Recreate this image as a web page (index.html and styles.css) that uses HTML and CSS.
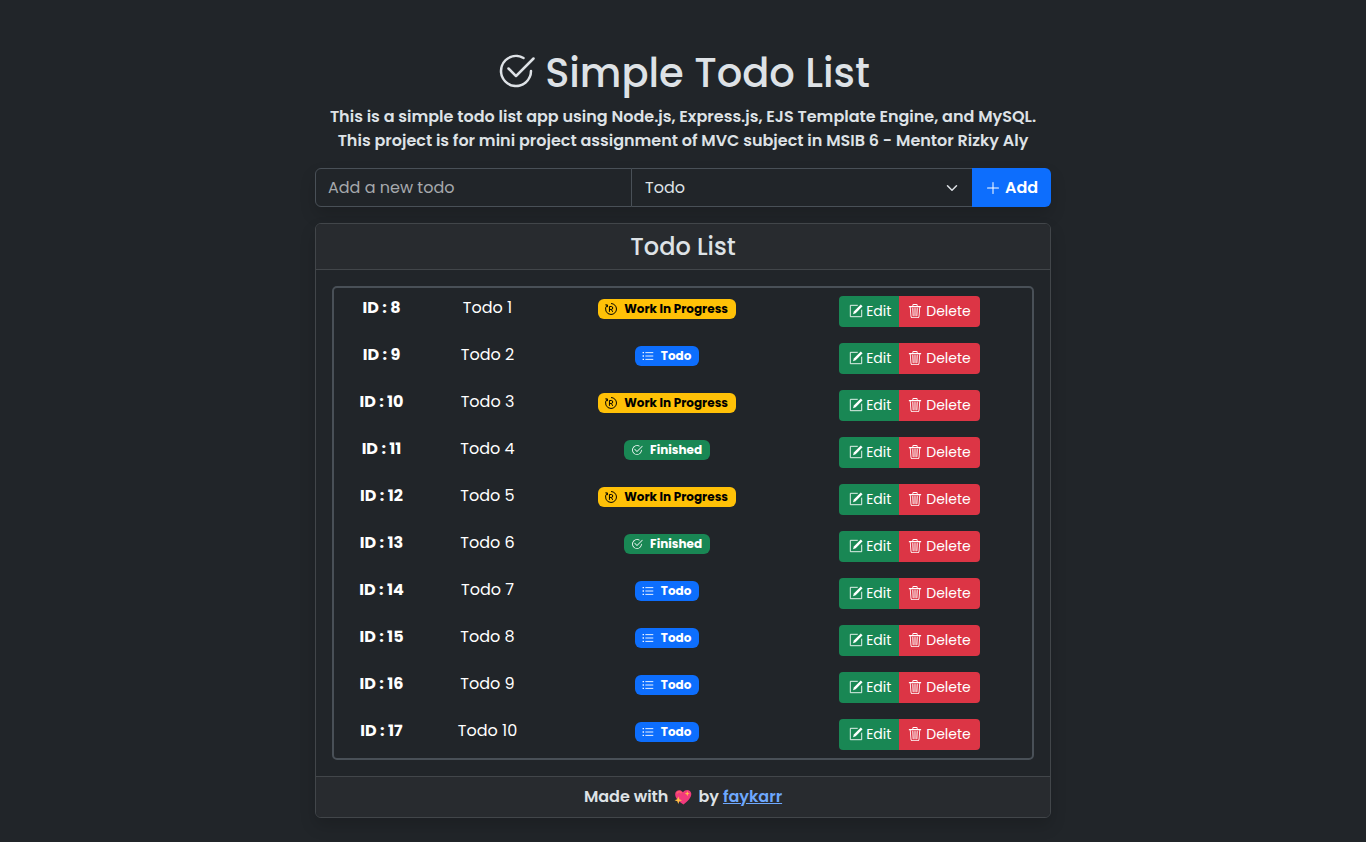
FILE: index.html
```html
<!DOCTYPE html>
<html lang="en"><head><meta charset="utf-8"><title>Simple Todo List</title><link rel="stylesheet" href="styles.css"></head>
<body>
<svg class="defs" aria-hidden="true">
<symbol id="check" viewBox="0 0 16 16"><path d="M2.5 8a5.5 5.5 0 0 1 8.25-4.764.5.5 0 0 0 .5-.866A6.5 6.5 0 1 0 14.5 8a.5.5 0 0 0-1 0 5.5 5.5 0 1 1-11 0z"/><path d="M15.354 3.354a.5.5 0 0 0-.708-.708L8 9.293 5.354 6.646a.5.5 0 1 0-.708.708l3 3a.5.5 0 0 0 .708 0l7-7z"/></symbol>
<symbol id="plus" viewBox="0 0 16 16"><path d="M8 2a.5.5 0 0 1 .5.5v5h5a.5.5 0 0 1 0 1h-5v5a.5.5 0 0 1-1 0v-5h-5a.5.5 0 0 1 0-1h5v-5A.5.5 0 0 1 8 2z"/></symbol>
<symbol id="list" viewBox="0 0 16 16"><path d="M5 3.500h9.500M5 8h9.500M5 12.500h9.500" fill="none" stroke="currentColor" stroke-width="1.200" stroke-linecap="round"/><path d="M.8 2.600h1.800v1.800H.8zM.8 7.100h1.800v1.800H.8zM.8 11.600h1.800v1.800H.8z"/></symbol>
<symbol id="wip" viewBox="0 0 16 16"><g fill="none" stroke="currentColor" stroke-width="1.300"><path d="M8 .7a7.300 7.300 0 0 1 0 14.600A7.300 7.300 0 0 1 2.800 2.900M.4 2.500h2.800v3M5.900 11.800V4.700h2.500a1.950 1.950 0 0 1 0 3.900H5.900M8.400 8.600l1.900 3.200"/></g></symbol>
<symbol id="edit" viewBox="0 0 16 16"><path d="M10 1.500H1.500v13h13V6.500" fill="none" stroke="currentColor"/><path d="M13.500.5 15.500 2.500 7.600 10.600 4.600 11.600 5.500 8.500z"/></symbol>
<symbol id="trash" viewBox="0 0 16 16"><path d="M6.500 1h3a.5.5 0 0 1 .5.5v1H6v-1a.5.5 0 0 1 .5-.5M11 2.500v-1A1.500 1.500 0 0 0 9.500 0h-3A1.500 1.500 0 0 0 5 1.500v1H1.500a.5.5 0 0 0 0 1h.538l.853 10.660A2 2 0 0 0 4.885 16h6.230a2 2 0 0 0 1.994-1.840l.853-10.660h.538a.5.5 0 0 0 0-1zm1.958 1-.846 10.580a1 1 0 0 1-.997.920h-6.230a1 1 0 0 1-.997-.920L3.042 3.500z"/><path d="M1.500 3h13M5.500 5l.4 8.500M8 5v8.500M10.500 5l-.4 8.500" fill="none" stroke="currentColor" stroke-width="1.150" stroke-linecap="round"/></symbol>
</svg>
<main class="page">
<h1 class="title"><svg class="icon"><use href="#check"/></svg><span>Simple Todo List</span></h1>
<p class="intro">This is a simple todo list app using Node.js, Express.js, EJS Template Engine, and MySQL.<br>This project is for mini project assignment of MVC subject in MSIB 6 - Mentor Rizky Aly</p>
<form class="form"><div class="field new">Add a new todo</div><div class="field status"><span>Todo</span><svg class="chev" viewBox="0 0 16 16"><path d="m2 5 6 6 6-6" fill="none" stroke="currentColor" stroke-width="2" stroke-linecap="round" stroke-linejoin="round"/></svg></div><button class="add" type="button"><svg class="icon"><use href="#plus"/></svg><span>Add</span></button></form>
<section class="card"><header class="head"><span>Todo List</span></header>
<div class="body"><div class="list">
<div class="row"><div class="id">ID : 8</div><div class="name">Todo 1</div><div><span class="badge wip"><svg class="icon"><use href="#wip"/></svg><span>Work In Progress</span></span></div><div class="actions"><div class="btn edit"><svg class="icon"><use href="#edit"/></svg><span>Edit</span></div><div class="btn delete"><svg class="icon"><use href="#trash"/></svg><span>Delete</span></div></div></div>
<div class="row"><div class="id">ID : 9</div><div class="name">Todo 2</div><div><span class="badge todo"><svg class="icon"><use href="#list"/></svg><span>Todo</span></span></div><div class="actions"><div class="btn edit"><svg class="icon"><use href="#edit"/></svg><span>Edit</span></div><div class="btn delete"><svg class="icon"><use href="#trash"/></svg><span>Delete</span></div></div></div>
<div class="row"><div class="id">ID : 10</div><div class="name">Todo 3</div><div><span class="badge wip"><svg class="icon"><use href="#wip"/></svg><span>Work In Progress</span></span></div><div class="actions"><div class="btn edit"><svg class="icon"><use href="#edit"/></svg><span>Edit</span></div><div class="btn delete"><svg class="icon"><use href="#trash"/></svg><span>Delete</span></div></div></div>
<div class="row"><div class="id">ID : 11</div><div class="name">Todo 4</div><div><span class="badge done"><svg class="icon"><use href="#check"/></svg><span>Finished</span></span></div><div class="actions"><div class="btn edit"><svg class="icon"><use href="#edit"/></svg><span>Edit</span></div><div class="btn delete"><svg class="icon"><use href="#trash"/></svg><span>Delete</span></div></div></div>
<div class="row"><div class="id">ID : 12</div><div class="name">Todo 5</div><div><span class="badge wip"><svg class="icon"><use href="#wip"/></svg><span>Work In Progress</span></span></div><div class="actions"><div class="btn edit"><svg class="icon"><use href="#edit"/></svg><span>Edit</span></div><div class="btn delete"><svg class="icon"><use href="#trash"/></svg><span>Delete</span></div></div></div>
<div class="row"><div class="id">ID : 13</div><div class="name">Todo 6</div><div><span class="badge done"><svg class="icon"><use href="#check"/></svg><span>Finished</span></span></div><div class="actions"><div class="btn edit"><svg class="icon"><use href="#edit"/></svg><span>Edit</span></div><div class="btn delete"><svg class="icon"><use href="#trash"/></svg><span>Delete</span></div></div></div>
<div class="row"><div class="id">ID : 14</div><div class="name">Todo 7</div><div><span class="badge todo"><svg class="icon"><use href="#list"/></svg><span>Todo</span></span></div><div class="actions"><div class="btn edit"><svg class="icon"><use href="#edit"/></svg><span>Edit</span></div><div class="btn delete"><svg class="icon"><use href="#trash"/></svg><span>Delete</span></div></div></div>
<div class="row"><div class="id">ID : 15</div><div class="name">Todo 8</div><div><span class="badge todo"><svg class="icon"><use href="#list"/></svg><span>Todo</span></span></div><div class="actions"><div class="btn edit"><svg class="icon"><use href="#edit"/></svg><span>Edit</span></div><div class="btn delete"><svg class="icon"><use href="#trash"/></svg><span>Delete</span></div></div></div>
<div class="row"><div class="id">ID : 16</div><div class="name">Todo 9</div><div><span class="badge todo"><svg class="icon"><use href="#list"/></svg><span>Todo</span></span></div><div class="actions"><div class="btn edit"><svg class="icon"><use href="#edit"/></svg><span>Edit</span></div><div class="btn delete"><svg class="icon"><use href="#trash"/></svg><span>Delete</span></div></div></div>
<div class="row"><div class="id">ID : 17</div><div class="name">Todo 10</div><div><span class="badge todo"><svg class="icon"><use href="#list"/></svg><span>Todo</span></span></div><div class="actions"><div class="btn edit"><svg class="icon"><use href="#edit"/></svg><span>Edit</span></div><div class="btn delete"><svg class="icon"><use href="#trash"/></svg><span>Delete</span></div></div></div>
</div></div>
<footer class="foot"><span>Made with</span><svg class="heart" viewBox="0 0 18 16"><path d="M9.500 15.500C4 12 1 8.500 1.200 4.800 1.500 1 6.500-.3 9 3.300c2.500-3.600 8-2.600 8.300 1.500.2 3.700-3.500 7.700-7.800 10.700z" fill="#f23a7c"/><path d="M3 4.500C3.500 2.500 6 2 7.500 4" fill="none" stroke="#ff6068" stroke-width="1.500"/><path d="m4.300 7.500 1 2.700 2.700 1-2.700 1-1 2.800-1-2.800-2.700-1 2.700-1zM13.300 2l.7 1.900 1.900.7-1.900.7-.7 1.900-.7-1.900-1.900-.7 1.900-.7z" fill="#ffbe45"/></svg><span>by</span><a class="link">faykarr</a></footer></section>
</main></body></html>
```
FILE: styles.css
```css
* { box-sizing: border-box; }
body { margin: 0; background: #212529; color: #dee2e6; font: 400 16px/24px Poppins, Inter, sans-serif; height: 842px; overflow: hidden; }
.defs { position: absolute; width: 0; height: 0; }
.icon { width: 1em; height: 1em; fill: currentColor; flex: none; }
.page { width: 736px; margin: 0 auto; padding-top: 49px; }
.title { margin: 0 0 8px; display: flex; align-items: center; justify-content: center; gap: 9px; font-size: 40px; line-height: 48px; font-weight: 500; }
.title .icon { position: relative; top: -2px; }
.intro { margin: 0 0 15px; text-align: center; font-weight: 600; white-space: nowrap; }
.form { display: flex; height: 39px; border-radius: 6px; box-shadow: 0 8px 16px rgba(0,0,0,.15); }
.field { border: 1px solid #495057; display: flex; align-items: center; padding: 0 12px; }
.new { width: 317px; border-radius: 6px 0 0 6px; color: #a6a9ad; }
.status { flex: 1; border-left: 0; border-right: 0; justify-content: space-between; padding-left: 13px; }
.chev { width: 16px; height: 12px; }
.add { width: 79px; border: 0; border-radius: 0 6px 6px 0; background: #0d6efd; color: #fff; font: 600 16px/24px Poppins, Inter, sans-serif; display: flex; align-items: center; justify-content: center; gap: 4px; padding: 0; }
.card { margin-top: 16px; height: 595px; border: 1px solid #42464a; border-radius: 6px; overflow: hidden; box-shadow: 0 8px 16px rgba(0,0,0,.15); }
.head { height: 46px; background: #282b2f; border-bottom: 1px solid #42464a; font-size: 24px; line-height: 45px; font-weight: 500; text-align: center; }
.body { height: 506px; padding: 16px; }
.list { border: 2px solid #495057; border-radius: 5px; }
.row { display: grid; grid-template-columns: 94px 119px 240px 245px; height: 47px; padding-top: 8px; text-align: center; color: #fff; }
.id { font-weight: 700; padding-left: 1px; }
.badge { display: inline-flex; height: 20px; margin-top: 3px; padding: 0 8px 0 7.500px; border-radius: 6px; align-items: center; gap: 6.700px; font-size: 12px; line-height: 20px; font-weight: 700; vertical-align: top; }
.wip { background: #ffc107; color: #000; }
.todo { background: #0d6efd; }
.done { background: #198754; }
.actions { display: flex; justify-content: center; height: 31px; font-size: 14px; }
.btn { display: flex; align-items: center; justify-content: center; gap: 4px; padding-bottom: 1px; }
.edit { width: 60px; background: #198754; border-radius: 4px 0 0 4px; gap: 3.500px; padding-left: 2px; }
.delete { width: 81px; background: #dc3545; border-radius: 0 4px 4px 0; }
.foot { height: 41px; padding-bottom: 1px; background: #282b2f; border-top: 1px solid #42464a; display: flex; justify-content: center; align-items: center; font-weight: 600; }
.heart { width: 18px; height: 16px; margin: 0 6px 0 6px; }
.link { color: #6ea8fe; text-decoration: underline; margin-left: 4px; }
```
